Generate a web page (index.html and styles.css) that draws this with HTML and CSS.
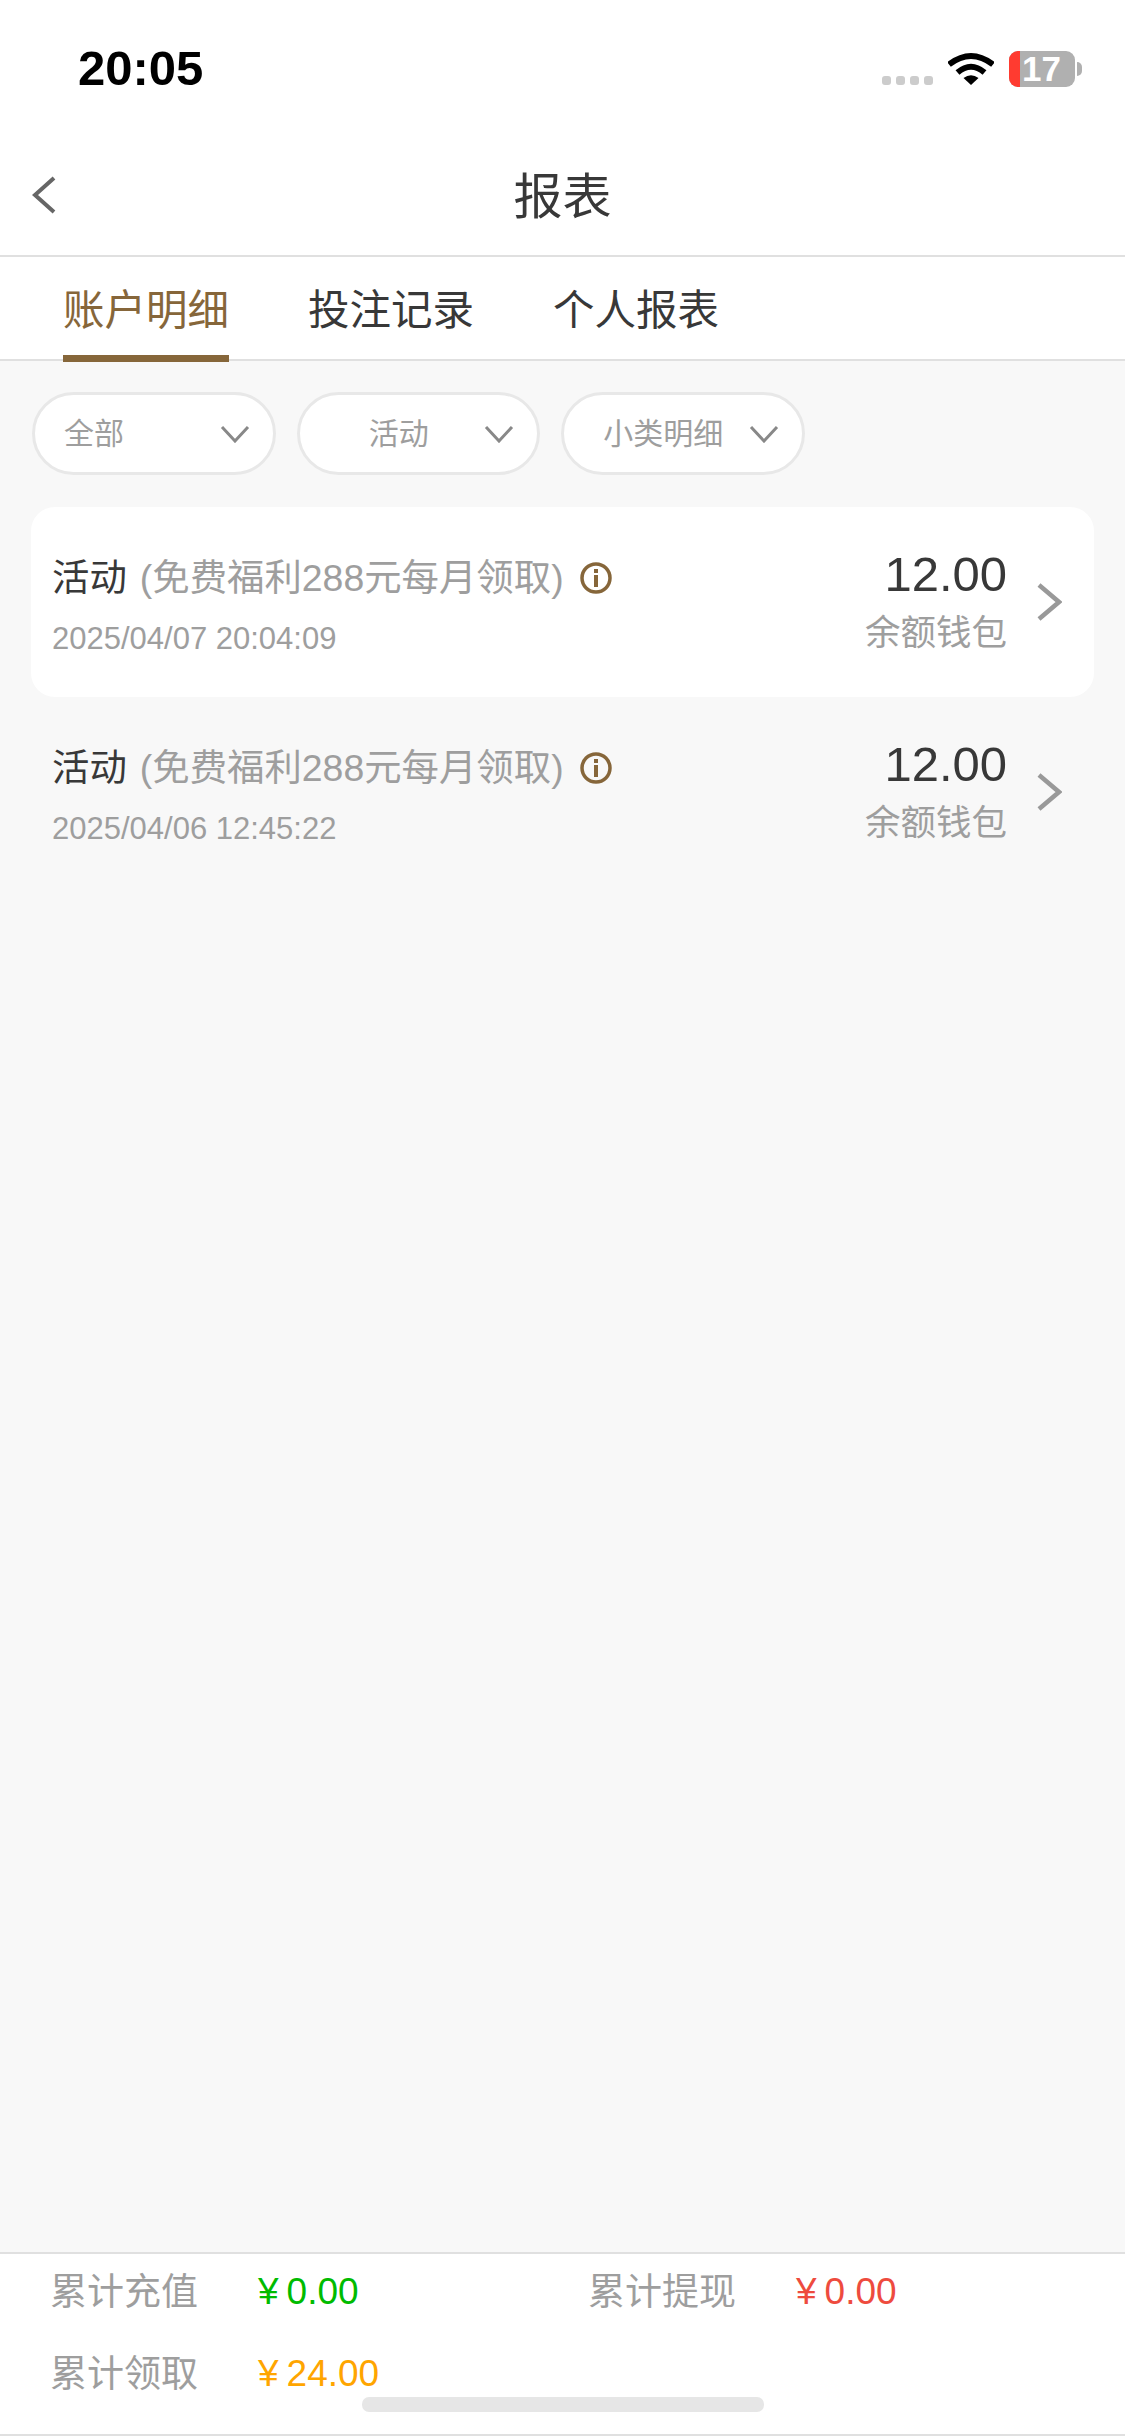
FILE: index.html
```html
<!DOCTYPE html>
<html lang="zh-CN">
<head>
  <meta charset="UTF-8">
  <meta name="viewport" content="width=device-width, initial-scale=1.0">
  <title>报表</title>
  <link rel="stylesheet" href="styles.css">
</head>

<body>

  <div class="page">
    <!-- Status bar -->
    <div class="status-bar">
      <span class="time">20:05</span>
      <div class="status-icons">
        <div class="signal"><i></i><i></i><i></i><i></i></div>
        <svg class="wifi" width="46" height="33" viewBox="0 0 46 33">
          <path d="M1 12.500Q23 -4.500 45 12.500" fill="none" stroke="#000" stroke-width="6"/>
          <path d="M9.500 20.500Q23 9 36.500 20.500" fill="none" stroke="#000" stroke-width="6"/>
          <path d="M15.500 26Q23 20.500 30.500 26L23 33Z" fill="#000"/>
        </svg>
        <div class="battery">
          <div class="battery-low"></div>
          <span class="battery-level">17</span>
        </div>
        <div class="battery-cap"></div>
      </div>
    </div>

    <header class="nav">
      <svg class="back" width="24" height="38" viewBox="0 0 24 38">
        <path d="M22 2L3 19L22 36" fill="none" stroke="#666" stroke-width="4"/>
      </svg>
      <h1>报表</h1>
    </header>

    <nav class="tabs">
      <a class="tab active">账户明细</a>
      <a class="tab">投注记录</a>
      <a class="tab">个人报表</a>
    </nav>

    <div class="filters">
      <div class="pill">
        <span class="pill-text left">全部</span>
        <svg class="caret" width="30" height="18" viewBox="0 0 30 18"><path d="M2 2L15 16L28 2" fill="none" stroke="#888" stroke-width="3"/></svg>
      </div>
      <div class="pill">
        <span class="pill-text">活动</span>
        <svg class="caret" width="30" height="18" viewBox="0 0 30 18"><path d="M2 2L15 16L28 2" fill="none" stroke="#888" stroke-width="3"/></svg>
      </div>
      <div class="pill">
        <span class="pill-text">小类明细</span>
        <svg class="caret" width="30" height="18" viewBox="0 0 30 18"><path d="M2 2L15 16L28 2" fill="none" stroke="#888" stroke-width="3"/></svg>
      </div>
    </div>

    <div class="records">
      <div class="record highlight">
        <div class="record-main">
          <div class="record-title">
            <span class="record-type">活动</span>
            <span class="record-note">(免费福利288元每月领取)</span>
            <svg class="info" width="32" height="32" viewBox="0 0 32 32">
              <circle cx="16" cy="16" r="14" fill="none" stroke="#86663a" stroke-width="3.500"/>
              <rect x="14" y="7" width="4" height="4" fill="#86663a"/>
              <rect x="14" y="13" width="4" height="12" fill="#86663a"/>
            </svg>
          </div>
          <div class="record-date">2025/04/07 20:04:09</div>
        </div>
        <div class="record-side">
          <div class="record-amount">12.00</div>
          <div class="record-wallet">余额钱包</div>
        </div>
        <svg class="more" width="26" height="38" viewBox="0 0 26 38"><path d="M3 2L23 19L3 36" fill="none" stroke="#999" stroke-width="4.500"/></svg>
      </div>

      <div class="record">
        <div class="record-main">
          <div class="record-title">
            <span class="record-type">活动</span>
            <span class="record-note">(免费福利288元每月领取)</span>
            <svg class="info" width="32" height="32" viewBox="0 0 32 32">
              <circle cx="16" cy="16" r="14" fill="none" stroke="#86663a" stroke-width="3.500"/>
              <rect x="14" y="7" width="4" height="4" fill="#86663a"/>
              <rect x="14" y="13" width="4" height="12" fill="#86663a"/>
            </svg>
          </div>
          <div class="record-date">2025/04/06 12:45:22</div>
        </div>
        <div class="record-side">
          <div class="record-amount">12.00</div>
          <div class="record-wallet">余额钱包</div>
        </div>
        <svg class="more" width="26" height="38" viewBox="0 0 26 38"><path d="M3 2L23 19L3 36" fill="none" stroke="#999" stroke-width="4.500"/></svg>
      </div>
    </div>

    <!-- Totals -->
    <footer class="summary">
      <div class="summary-item">
        <span class="summary-label">累计充值</span>
        <span class="summary-value green"><span class="yen">¥</span>0.00</span>
      </div>
      <div class="summary-item">
        <span class="summary-label">累计提现</span>
        <span class="summary-value red"><span class="yen">¥</span>0.00</span>
      </div>
      <div class="summary-item">
        <span class="summary-label">累计领取</span>
        <span class="summary-value orange"><span class="yen">¥</span>24.00</span>
      </div>
      <div class="home-bar"></div>
    </footer>
  </div>

</body>

</html>
```

FILE: styles.css
```css
/* General Styles */
body {
  font-family: "Liberation Sans", "Noto Sans CJK SC", sans-serif;
  background-color: #f8f8f8;
  color: #383838;
  margin: 0;
  padding: 0;
}

.page {
  display: flex;
  flex-direction: column;
  height: 2436px;
  overflow: hidden;
}

/* Status Bar */
.status-bar {
  display: flex;
  justify-content: space-between;
  height: 136px;
  padding: 0 43px 0 78px;
  background-color: #fff;
  box-sizing: border-box;
}

.time {
  font-size: 49px;
  font-weight: bold;
  line-height: 50px;
  margin-top: 43px;
  color: #000;
}

.status-icons {
  display: flex;
  align-items: flex-start;
  padding-top: 51px;
}

.signal {
  display: flex;
  gap: 5px;
  margin: 25px 15px 0 0;
}

.signal i {
  display: block;
  width: 9px;
  height: 9px;
  border-radius: 3px;
  background-color: #ccc;
}

.wifi {
  margin: 1px 15px 0 0;
}

.battery {
  display: flex;
  width: 66px;
  height: 36px;
  border-radius: 9px;
  background-color: #b0b0b0;
}

.battery-low {
  width: 11px;
  border-radius: 9px 0 0 9px;
  background-color: #ff3b30;
}

.battery-level {
  margin-left: 2px;
  font-size: 35px;
  font-weight: bold;
  line-height: 36px;
  color: #fff;
}

.battery-cap {
  width: 5px;
  height: 14px;
  margin: 11px 0 0 2px;
  border-radius: 0 7px 7px 0;
  background-color: #b0b0b0;
}

/* Nav */
.nav {
  display: flex;
  align-items: center;
  justify-content: center;
  position: relative;
  height: 119px;
  background-color: #fff;
  border-bottom: 2px solid #e0e0e0;
}

.nav h1 {
  margin: 0;
  padding-bottom: 6px;
  font-size: 49px;
  font-weight: normal;
}

.back {
  position: absolute;
  left: 32px;
  top: 40px;
}

/* Tabs */
.tabs {
  display: flex;
  gap: 79px;
  height: 102px;
  padding-left: 63px;
  background-color: #fff;
  border-bottom: 2px solid #e0e0e0;
}

.tab {
  position: relative;
  font-size: 41.500px;
  line-height: 107px;
}

.tab.active {
  color: #86663a;
}

.tab.active::after {
  content: "";
  position: absolute;
  left: 0;
  right: 0;
  bottom: -3px;
  height: 7px;
  background-color: #86663a;
}

/* Filters */
.filters {
  display: flex;
  gap: 21px;
  padding: 31px 32px 32px;
}

.pill {
  display: flex;
  align-items: center;
  width: 243.500px;
  height: 83px;
  padding: 0 23px 0 29px;
  border: 3px solid #e8e8e8;
  border-radius: 42px;
  background-color: #fff;
  box-sizing: border-box;
}

.pill-text {
  flex: 1;
  padding: 0 5px 5px 0;
  font-size: 30px;
  color: #9e9e9e;
  text-align: center;
}

.pill-text.left {
  text-align: left;
}

.caret {
  margin-left: 10px;
}

/* Records */
.records {
  flex: 1;
  padding: 0 31px;
}

.record {
  display: flex;
  align-items: center;
  height: 190px;
  padding: 0 32px 0 21px;
  border-radius: 24px;
  box-sizing: border-box;
}

.record.highlight {
  background-color: #fff;
}

.record-main {
  flex: 1;
  margin-top: 9px;
}

.record-title {
  display: flex;
  align-items: center;
  font-size: 37.400px;
  line-height: 44px;
}

.record-type {
  margin-right: 13px;
}

.record-note {
  color: #9e9e9e;
}

.info {
  margin-left: 16px;
}

.record-date {
  margin-top: 21px;
  font-size: 31px;
  line-height: 36px;
  color: #9e9e9e;
}

.record-side {
  margin-bottom: 3px;
  text-align: right;
}

.record-amount {
  font-size: 49px;
  line-height: 56px;
}

.record-wallet {
  margin-top: 9px;
  font-size: 35.500px;
  line-height: 44px;
  color: #9e9e9e;
}

.more {
  margin-left: 29px;
}

/* Summary */
.summary {
  display: grid;
  grid-template-columns: 538px 1fr;
  grid-auto-rows: 82px;
  position: relative;
  height: 184px;
  padding-left: 50px;
  background-color: #fff;
  border-top: 2px solid #e0e0e0;
  border-bottom: 2px solid #e0e0e0;
  box-sizing: border-box;
  align-content: start;
}

.summary-item {
  display: flex;
  align-items: center;
  height: 76px;
}

.summary-label {
  width: 208px;
  padding-bottom: 6px;
  font-size: 37px;
  color: #9e9e9e;
}

.summary-value {
  font-size: 37px;
}

.yen {
  margin-right: 8px;
}

.green {
  color: #00bb00;
}

.red {
  color: #ee4b3e;
}

.orange {
  color: #ffa500;
}

.home-bar {
  position: absolute;
  left: 362px;
  bottom: 22px;
  width: 402px;
  height: 15px;
  border-radius: 7px;
  background-color: #e6e6e6;
}
```
